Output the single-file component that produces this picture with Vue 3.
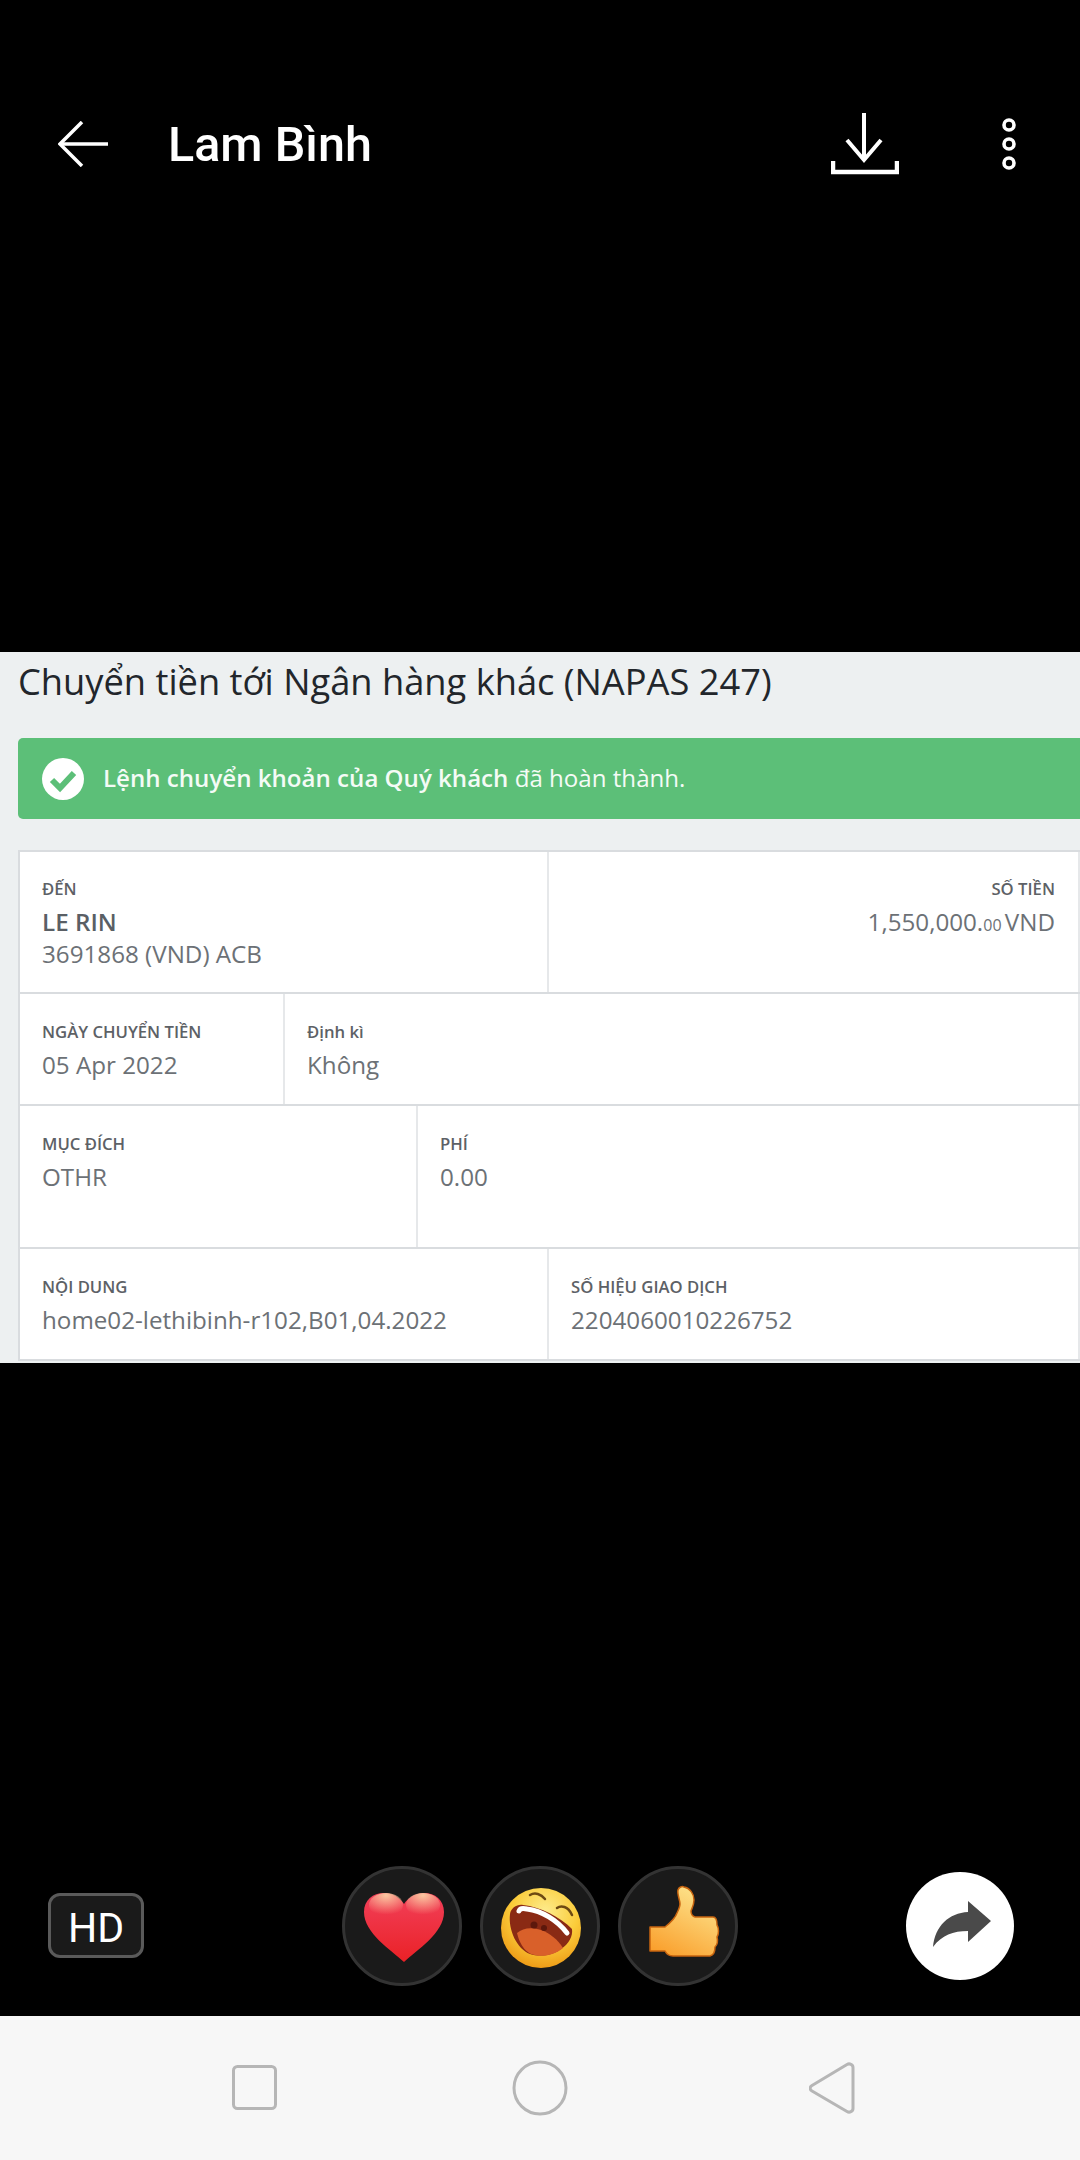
<template>
  <div class="screen">
    <header class="topbar">
      <svg class="back" width="50" height="46" viewBox="0 0 50 46" fill="none" stroke="#fff" stroke-width="3.5">
        <path d="M50 23H2" />
        <path d="M24 1 2 23l22 22" />
      </svg>
      <h1 class="name">Lam Bình</h1>
      <svg class="download" width="68" height="62" viewBox="0 0 68 62" fill="none" stroke="#fff" stroke-width="4">
        <path d="M33 0v46" />
        <path d="M16 27 33 47l17-20" />
        <path d="M2 48v11h64V48" stroke-width="4.5" />
      </svg>
      <svg class="more" width="16" height="54" viewBox="0 0 16 54" fill="none" stroke="#fff" stroke-width="3.6">
        <circle cx="8" cy="8" r="5" />
        <circle cx="8" cy="27" r="5" />
        <circle cx="8" cy="46" r="5" />
      </svg>
    </header>

    <section class="shot">
      <h2 class="shot-title">Chuyển tiền tới Ngân hàng khác (NAPAS 247)</h2>
      <div class="notice">
        <svg width="42" height="42" viewBox="0 0 42 42">
          <circle cx="21" cy="21" r="21" fill="#fff" />
          <path d="M10 22l8 8 14-15" fill="none" stroke="#5cbf78" stroke-width="6" />
        </svg>
        <p><b>Lệnh chuyển khoản của Quý khách</b> đã hoàn thành.</p>
      </div>
      <div class="details">
        <div class="row row-first">
          <div class="cell w-half">
            <div class="label">ĐẾN</div>
            <div class="value strong">LE RIN</div>
            <div class="value">3691868 (VND) ACB</div>
          </div>
          <div class="cell grow right">
            <div class="label">SỐ TIỀN</div>
            <div class="value amount">1,550,000.<small>00</small> VND</div>
          </div>
        </div>
        <div class="row row-short">
          <div class="cell w-date">
            <div class="label">NGÀY CHUYỂN TIỀN</div>
            <div class="value">05 Apr 2022</div>
          </div>
          <div class="cell grow">
            <div class="label">Định kì</div>
            <div class="value">Không</div>
          </div>
        </div>
        <div class="row row-tall">
          <div class="cell w-purpose">
            <div class="label">MỤC ĐÍCH</div>
            <div class="value">OTHR</div>
          </div>
          <div class="cell grow">
            <div class="label">PHÍ</div>
            <div class="value">0.00</div>
          </div>
        </div>
        <div class="row row-short">
          <div class="cell w-half">
            <div class="label">NỘI DUNG</div>
            <div class="value">home02-lethibinh-r102,B01,04.2022</div>
          </div>
          <div class="cell grow">
            <div class="label">SỐ HIỆU GIAO DỊCH</div>
            <div class="value">2204060010226752</div>
          </div>
        </div>
      </div>
    </section>

    <div class="actions">
      <div class="hd">HD</div>
      <div class="reactions">
        <div class="reaction">
          <svg width="95" height="90" viewBox="0 0 95 90">
            <defs>
              <linearGradient id="heartFill" x1="0" y1="0" x2="0" y2="1">
                <stop offset="0" stop-color="#f2405a" />
                <stop offset="1" stop-color="#ea2126" />
              </linearGradient>
              <radialGradient id="heartGlow" cx="0.5" cy="0.1" r="0.8">
                <stop offset="0" stop-color="#fbc7a0" />
                <stop offset="1" stop-color="#fbc7a0" stop-opacity="0" />
              </radialGradient>
            </defs>
            <path d="M49 81C36 69 9 52 9 31 9 19 18 12 29 12c9 0 16 5 20 11 4-6 11-11 20-11 11 0 20 7 20 19 0 21-27 38-40 50z" fill="url(#heartFill)" />
            <ellipse cx="31" cy="24" rx="17" ry="12" fill="url(#heartGlow)" />
            <ellipse cx="68" cy="24" rx="17" ry="12" fill="url(#heartGlow)" />
          </svg>
        </div>
        <div class="reaction">
          <svg width="100" height="100" viewBox="0 0 100 100">
            <defs>
              <radialGradient id="faceFill" cx="0.55" cy="0.3" r="0.75">
                <stop offset="0" stop-color="#fdec8e" />
                <stop offset="0.55" stop-color="#fbcc3a" />
                <stop offset="1" stop-color="#ec9412" />
              </radialGradient>
            </defs>
            <circle cx="51" cy="52" r="40" fill="url(#faceFill)" />
            <path d="M40 19c5-3 11-1 15 4M67 32c4-3 11-2 15 7" fill="none" stroke="#6e4a12" stroke-width="2.5" stroke-linecap="round" />
            <path d="M20 38c1-6 7-10 13-9 18 2 37 12 49 24 1 7-3 15-11 20-9 7-22 8-31 5C27 73 18 54 20 38z" fill="#8a2a14" />
            <path d="M27 57c6-5 14-6 24-3 9 3 17 10 22 18-8 7-21 10-32 6-7-3-12-12-14-21z" fill="#d9602a" />
            <circle cx="44" cy="49" r="3.500" fill="#5c180c" />
            <circle cx="54" cy="52" r="3" fill="#5c180c" />
            <path d="M29 35c1-3 4-3 8-2 15 2 30 11 40 24" fill="none" stroke="#fff" stroke-width="5" stroke-linecap="round" />
          </svg>
        </div>
        <div class="reaction">
          <svg class="thumb" width="90" height="100" viewBox="0 0 90 100">
            <defs>
              <linearGradient id="thumbFill" x1="0.7" y1="0" x2="0.2" y2="1">
                <stop offset="0" stop-color="#fde58e" />
                <stop offset="1" stop-color="#fa9f2c" />
              </linearGradient>
            </defs>
            <path d="M10 51h15c5-4 10-8 12-14 2-4 3-7 3-9 0-4-3-10-2-14 1-3 4-4 6-3 6 1 10 7 10 13 0 5-2 8-3 11 0 3 1 5 4 6h18c3 0 4 3 4 8 2 3 2 9 0 12 1 4 0 8-2 10 0 5-1 8-5 9H33c-4 0-7-3-8-5H10z" fill="url(#thumbFill)" stroke="#c8640f" stroke-width="1.5" stroke-linejoin="round" />
          </svg>
        </div>
      </div>
      <div class="share">
        <svg width="108" height="108" viewBox="0 0 108 108">
          <path d="M85 49 62 29v11c-19 1-33 14-35 35 9-12 20-16 35-16v11z" fill="#4a4a4a" />
        </svg>
      </div>
    </div>

    <nav class="navbar">
      <svg width="46" height="46" viewBox="0 0 46 46" fill="none" stroke="#b6b6b6" stroke-width="3">
        <rect x="1.500" y="1.500" width="42" height="42" rx="4" />
      </svg>
      <svg width="56" height="56" viewBox="0 0 56 56" fill="none" stroke="#b6b6b6" stroke-width="3">
        <circle cx="28" cy="28" r="26" />
      </svg>
      <svg width="46" height="52" viewBox="0 0 46 52" fill="none" stroke="#b6b6b6" stroke-width="3" stroke-linejoin="round">
        <path d="M3 23.500 38 2.500c2.500-1.500 6 0 6 3v41c0 3-3.500 4.500-6 3L3 29c-2.500-1.500-2.500-4 0-5.500z" />
      </svg>
    </nav>
  </div>
</template>

<script setup>
</script>

<style>
html,
body {
  background: #000;
}
</style>

<style scoped>
.screen {
  width: 1080px;
  height: 2160px;
  display: flex;
  flex-direction: column;
  background: #000;
  overflow: hidden;
}

.topbar {
  height: 652px;
  box-sizing: border-box;
  padding: 113px 63px 0 58px;
  display: flex;
  align-items: flex-start;
}
.back {
  margin-top: 8px;
}
.name {
  margin: 4px 0 0 60px;
  font: 500 48.500px/56px Roboto, sans-serif;
  color: #fff;
}
.download {
  margin-left: auto;
}
.more {
  margin: 4px 0 0 102px;
}

.shot {
  height: 711px;
  background: #edf0f1;
  font-family: "Open Sans", sans-serif;
  overflow: hidden;
}
.shot-title {
  margin: 0;
  padding: 0 0 0 18px;
  font-size: 36.250px;
  font-weight: 400;
  line-height: 58px;
  color: #22262b;
  white-space: nowrap;
}
.notice {
  margin: 28px 0 0 18px;
  height: 81px;
  border-radius: 5px 0 0 5px;
  background: #5cbf78;
  display: flex;
  align-items: center;
  padding-left: 24px;
  color: #f4fbf6;
}
.notice p {
  margin: -2px 0 0 19px;
  font-size: 24.100px;
}
.notice b {
  font-weight: 600;
}

.details {
  margin: 31px 0 0 18px;
  border-top: 2px solid #d9dcdf;
  border-left: 2px solid #d9dcdf;
  background: #fff;
  color: #6c7176;
}
.row {
  display: flex;
  border-bottom: 2px solid #d9dcdf;
  box-sizing: border-box;
}
.row-first {
  height: 142px;
}
.row-short {
  height: 112px;
}
.row-tall {
  height: 143px;
}
.cell {
  box-sizing: border-box;
  padding: 26px 24px 0 22px;
  border-right: 2px solid #e6e8ea;
}
.row-first .cell {
  padding-top: 25px;
}
.w-half {
  width: 529px;
}
.w-date {
  width: 265px;
}
.w-purpose {
  width: 398px;
}
.grow {
  flex: 1;
}
.right {
  text-align: right;
  padding-right: 23px;
}
.label {
  font-size: 16.700px;
  line-height: 24px;
  font-weight: 600;
  color: #5d6166;
  white-space: nowrap;
}
.value {
  font-size: 24.200px;
  line-height: 32px;
  margin-top: 5px;
  white-space: nowrap;
}
.value small {
  font-size: 16px;
}
.amount {
  word-spacing: -3px;
  margin-top: 5px;
}
.strong {
  font-weight: 600;
  color: #5a5f65;
  margin-top: 5px;
}
.strong + .value {
  margin-top: 0;
}

.actions {
  flex: 1;
  display: flex;
  align-items: flex-end;
  padding: 0 66px 30px 48px;
}
.hd {
  width: 96px;
  height: 65px;
  box-sizing: border-box;
  margin-bottom: 28px;
  border: 3px solid #5a5a5a;
  border-radius: 12px;
  background: #1a1a1a;
  color: #fff;
  font: 400 41px/64px Roboto, sans-serif;
  text-align: center;
}
.reactions {
  display: flex;
  gap: 18px;
  margin-left: 198px;
}
.reaction {
  width: 120px;
  height: 120px;
  box-sizing: border-box;
  border: 3px solid #333;
  border-radius: 50%;
  background: #1a1a1a;
  display: flex;
  align-items: center;
  justify-content: center;
}
.thumb {
  margin-left: 14px;
}
.share {
  width: 108px;
  height: 108px;
  margin: 0 0 6px auto;
  border-radius: 50%;
  background: #fff;
}
.share svg,
.navbar svg {
  display: block;
}

.navbar {
  height: 144px;
  background: #f7f7f7;
  display: flex;
  align-items: center;
  padding-left: 232px;
  gap: 234px;
}
.navbar svg:nth-child(3) {
  margin-left: 7px;
}
</style>
